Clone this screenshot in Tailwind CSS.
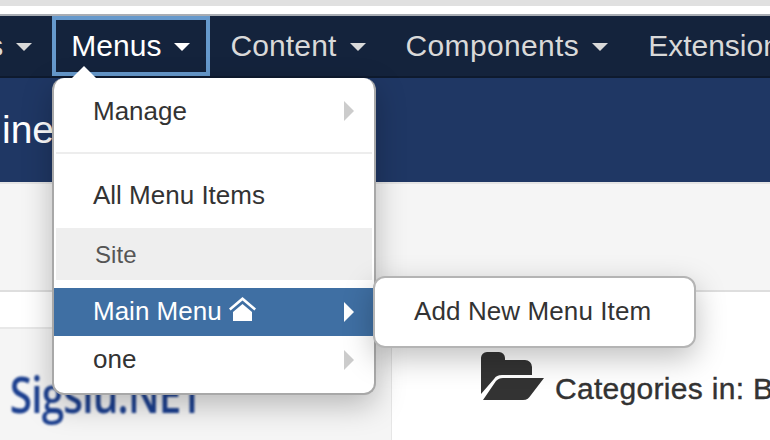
<!DOCTYPE html>
<html lang="en">
  <head>
    <meta charset="UTF-8" />
    <meta name="viewport" content="width=device-width, initial-scale=1.0" />
    <title>Menus</title>
    <script src="https://cdn.jsdelivr.net/npm/@tailwindcss/browser@4"></script>
  </head>
  <body class="relative w-[770px] h-[440px] overflow-hidden bg-white font-['Liberation_Sans',Arial,sans-serif] text-[#333]">
    <!-- browser strip above the admin bar -->
    <div class="h-[6px] bg-[#e0e0e0]"></div>
    <div class="h-[8px] bg-white"></div>

    <!-- navbar -->
    <nav class="h-[64px] border-t-2 border-t-[#a9adb3] border-b-2 border-b-[#0e1a2e] bg-[#14233c] flex items-start text-[30px] leading-[60px] text-[#d9d9d9] whitespace-nowrap">
      <a class="flex items-center h-[60px] px-5 -ml-[95px]">Users<span class="ml-[13px] mt-[2px] border-x-[8px] border-x-transparent border-t-[8px] border-t-[#d9d9d9]"></span></a>
      <a class="flex items-center h-[60px] pl-[15px] pr-[16px] border-4 border-[#6699cc] text-white">Menus<span class="ml-[13px] mt-[2px] border-x-[8px] border-x-transparent border-t-[8px] border-t-white"></span></a>
      <a class="flex items-center h-[60px] px-5 tracking-[0.15px]">Content<span class="ml-[13px] mt-[2px] border-x-[8px] border-x-transparent border-t-[8px] border-t-[#d9d9d9]"></span></a>
      <a class="flex items-center h-[60px] px-5 tracking-[0.35px]">Components<span class="ml-[13px] mt-[2px] border-x-[8px] border-x-transparent border-t-[8px] border-t-[#d9d9d9]"></span></a>
      <a class="flex items-center h-[60px] px-5">Extensions</a>
    </nav>

    <!-- page title bar -->
    <header class="h-[104px] bg-[#1f3764] flex items-center pl-[2px] text-[39px] text-white">ine</header>

    <!-- toolbar -->
    <div class="h-[110px] border-t-2 border-t-[#e4e4e4] border-b-2 border-b-[#dedede] bg-[#f5f5f5]"></div>

    <!-- content -->
    <div class="flex h-[148px]">
      <aside class="w-[392px] shrink-0 border-r border-[#e6e6e6] bg-[#f5f5f5] overflow-hidden">
        <div class="h-[37px] bg-white border-b-2 border-[#e8e8e8]"></div>
        <div class="pl-[12px] pt-[35px] font-['Open_Sans',sans-serif] font-semibold text-[50px] leading-[60px] tracking-[-1px] text-[#1b3f8f] blur-[1px] origin-left scale-x-[0.81]">Sigsiu.NET</div>
      </aside>
      <main class="flex-1 pl-[88px] pt-[60px] flex items-end self-start gap-[11px] whitespace-nowrap">
        <svg class="w-[64px] h-[48px] shrink-0" viewBox="0 0 64 48" fill="#333">
          <path d="M1 42V6a6 6 0 0 1 6-6h12a6 6 0 0 1 6 6v2h20a7 7 0 0 1 7 7v8H22c-4 0-6 1-8 4z" />
          <path d="M3 48 16 29c2-2 4-3 7-3h41L51 43c-2 3-4 5-8 5z" />
        </svg>
        <h2 class="text-[30px] leading-[30px] -mb-[4px] tracking-[0.3px] text-[#333] [-webkit-text-stroke:0.4px_#333]">Categories in: B</h2>
      </main>
    </div>

    <!-- dropdown, lies over the page -->
    <div class="absolute left-[52px] top-[78px] w-[324px] h-[317px] rounded-[12px] border-2 border-t-0 border-[#a8a8a8] bg-white text-[26px] shadow-[0_10px_30px_rgba(0,0,0,0.25)]">
      <span class="absolute left-[18px] -top-[12px] border-x-[12px] border-x-transparent border-b-[12px] border-b-white"></span>
      <div class="flex items-center justify-between h-[66px] pl-[39px] pr-[20px]">Manage<span class="border-y-[10px] border-y-transparent border-l-[10px] border-l-[#cccccc]"></span></div>
      <div class="h-[2px] mx-[2px] mt-[8px] bg-[#ededed]"></div>
      <div class="flex items-center h-[74px] pt-[8px] pl-[39px]">All Menu Items</div>
      <div class="h-[52px] mx-[2px] pl-[39px] pt-[1px] flex items-center bg-[#eeeeee] text-[24px] tracking-[0.1px] text-[#555]">Site</div>
      <div class="mt-[8px] h-[48px] pl-[39px] pr-[20px] flex items-center justify-between bg-[#3f6fa3] text-white">
        <span class="flex items-center gap-[7px] -mt-[2px]">Main Menu
          <svg class="w-[27px] h-[24px] -mt-[4px]" viewBox="0 0 27 24" fill="#fff">
            <path d="M13.5 0 27 11.5l-1.6 2L13.5 3.5 1.6 13.5 0 11.5z" />
            <path d="M13.5 7 23 15v9H4v-9z" />
          </svg>
        </span>
        <span class="border-y-[10px] border-y-transparent border-l-[10px] border-l-white"></span>
      </div>
      <div class="flex items-center justify-between h-[48px] pl-[39px] pr-[20px]"><span class="-mt-[1px]">one</span><span class="border-y-[10px] border-y-transparent border-l-[10px] border-l-[#cccccc]"></span></div>
    </div>

    <!-- flyout -->
    <div class="absolute left-[373px] top-[276px] w-[323px] h-[72px] rounded-[12px] border-2 border-[#b4b4b4] bg-white pl-[39px] pb-[2px] flex items-center text-[26px] tracking-[0.1px] shadow-[0_10px_30px_rgba(0,0,0,0.25)]">Add New Menu Item</div>
  </body>
</html>
